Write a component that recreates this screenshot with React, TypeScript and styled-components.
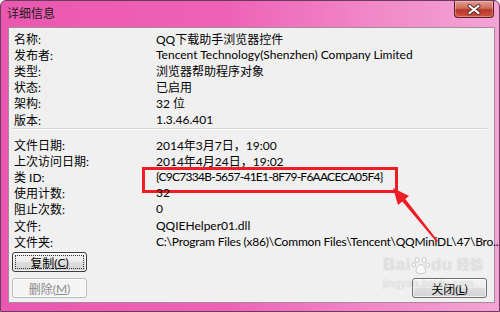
import React from 'react';
import styled, { createGlobalStyle } from 'styled-components';

const GlobalStyle = createGlobalStyle`
  html, body {
    margin: 0;
    padding: 0;
    background: #ffffff;
  }
  * {
    box-sizing: border-box;
  }
`;

const uiFont = `Lato, "Noto Sans CJK SC", sans-serif`;

const Window = styled.div`
  position: relative;
  width: 500px;
  height: 312px;
  display: flex;
  flex-direction: column;
  overflow: hidden;
  border: 1px solid #6b3a5c;
  border-radius: 6px 6px 0 0;
  background: linear-gradient(90deg, #ea58b0 0%, #ee62b6 45%, #f188c8 75%, #f3a4d6 100%);
  font-family: ${uiFont};
  font-size: 12px;
  color: #000;
`;

const TitleBar = styled.div`
  height: 26px;
  display: flex;
  justify-content: space-between;
  align-items: flex-start;
  padding: 0 5px 0 6px;
`;

const Title = styled.div`
  line-height: 26px;
  font-size: 12px;
  color: #1a1a1a;
`;

const CloseButton = styled.div`
  width: 40px;
  height: 17px;
  display: flex;
  align-items: center;
  justify-content: center;
  border: 1px solid #5c1e1e;
  border-top: none;
  border-radius: 0 0 4px 4px;
  background: linear-gradient(180deg, #e29c90 0%, #cf6e5e 45%, #b8352a 55%, #cf5443 100%);
  box-shadow: inset 0 0 0 1px rgba(255, 255, 255, 0.3);
`;

const Client = styled.div`
  flex: 1;
  margin: 0 4px 8px 7px;
  display: flex;
  flex-direction: column;
  background: #f0f0f0;
  border: 1px solid #a58a9c;
  padding: 2px 7px 4px 5px;
`;

const InfoGroup = styled.div`
  display: grid;
  grid-template-columns: 142px 1fr;
  grid-auto-rows: 16.2px;
  align-items: center;
`;

const Label = styled.div`
  white-space: nowrap;
`;

const Value = styled.div<{ $highlight?: boolean; $tight?: boolean }>`
  position: relative;
  white-space: nowrap;
  letter-spacing: ${(p) => (p.$highlight ? '-0.75px' : p.$tight ? '-0.2px' : 'normal')};

  ${(p) =>
    p.$highlight &&
    `
    &::after {
      content: '';
      position: absolute;
      left: -14px;
      top: -2px;
      width: 250px;
      height: 20px;
      border: 3px solid #ee1c24;
    }
  `}
`;

const Separator = styled.div`
  margin: 1px 0 6px -2px;
  border-top: 1px solid #d4d4d4;
  border-bottom: 1px solid #ffffff;
`;

const Footer = styled.div`
  margin-top: auto;
  margin-left: -2px;
  display: flex;
  justify-content: space-between;
  align-items: flex-end;
`;

const ButtonColumn = styled.div`
  display: flex;
  flex-direction: column;
  gap: 6px;
`;

const Button = styled.div<{ $focused?: boolean; $disabled?: boolean }>`
  position: relative;
  width: 75px;
  height: 20px;
  display: flex;
  align-items: center;
  justify-content: center;
  border-radius: 3px;
  font-size: 12px;
  border: 1px solid ${(p) => (p.$disabled ? '#b8bcc0' : p.$focused ? '#3c3c3c' : '#707070')};
  color: ${(p) => (p.$disabled ? '#8c8c8c' : '#000')};
  background: ${(p) =>
    p.$disabled
      ? '#f4f4f4'
      : 'linear-gradient(180deg, #f4f4f4 0%, #ececec 48%, #dedede 52%, #d2d2d2 100%)'};
  box-shadow: inset 0 0 0 1px rgba(255, 255, 255, 0.7);

  ${(p) =>
    p.$focused &&
    `
    &::after {
      content: '';
      position: absolute;
      inset: 2px;
      border: 1px dotted #333;
    }
  `}

  & u {
    text-decoration: underline;
  }
`;

const Overlay = styled.svg`
  position: absolute;
  left: 0;
  top: 0;
  pointer-events: none;
`;

const Watermark = styled.div`
  position: absolute;
  left: 382px;
  top: 254px;
  pointer-events: none;
  color: rgba(255, 255, 255, 0.5);
  text-shadow: 0 0 1px rgba(120, 120, 120, 0.4);
  font-family: "Liberation Sans", "Noto Sans CJK SC", sans-serif;
`;

const WatermarkLogo = styled.div`
  display: flex;
  align-items: flex-end;
  font-size: 17px;
  font-weight: bold;
  line-height: 20px;
  letter-spacing: 0.5px;
`;

const WatermarkCn = styled.span`
  font-size: 13px;
  margin-left: 4px;
`;

const WatermarkUrl = styled.div`
  font-size: 10px;
  margin-top: 3px;
  letter-spacing: 0.6px;
`;

const general: [string, string][] = [
  ['名称:', 'QQ下载助手浏览器控件'],
  ['发布者:', 'Tencent Technology(Shenzhen) Company Limited'],
  ['类型:', '浏览器帮助程序对象'],
  ['状态:', '已启用'],
  ['架构:', '32 位'],
  ['版本:', '1.3.46.401'],
];

const detail: [string, string][] = [
  ['文件日期:', '2014年3月7日，19:00'],
  ['上次访问日期:', '2014年4月24日，19:02'],
  ['类 ID:', '{C9C7334B-5657-41E1-8F79-F6AACECA05F4}'],
  ['使用计数:', '32'],
  ['阻止次数:', '0'],
  ['文件:', 'QQIEHelper01.dll'],
  ['文件夹:', 'C:\\Program Files (x86)\\Common Files\\Tencent\\QQMiniDL\\47\\Bro...'],
];

const App: React.FC = () => {
  return (
    <>
      <GlobalStyle />
      <Window>
        <TitleBar>
          <Title>详细信息</Title>
          <CloseButton>
            <svg width="14" height="11" viewBox="0 0 14 11">
              <path
                d="M2.5 2 L11.5 9 M11.5 2 L2.5 9"
                stroke="#5a2a2a"
                strokeWidth="4"
                strokeLinecap="round"
              />
              <path
                d="M2.5 2 L11.5 9 M11.5 2 L2.5 9"
                stroke="#ffffff"
                strokeWidth="2.2"
                strokeLinecap="round"
              />
            </svg>
          </CloseButton>
        </TitleBar>
        <Client>
          <InfoGroup>
            {general.map(([k, v]) => (
              <React.Fragment key={k}>
                <Label>{k}</Label>
                <Value>{v}</Value>
              </React.Fragment>
            ))}
          </InfoGroup>
          <Separator />
          <InfoGroup>
            {detail.map(([k, v]) => (
              <React.Fragment key={k}>
                <Label>{k}</Label>
                <Value $highlight={k === '类 ID:'} $tight={k === '文件夹:'}>
                  {v}
                </Value>
              </React.Fragment>
            ))}
          </InfoGroup>
          <Footer>
            <ButtonColumn>
              <Button $focused>
                复制(<u>C</u>)
              </Button>
              <Button $disabled>
                删除(<u>M</u>)
              </Button>
            </ButtonColumn>
            <Button>
              关闭(<u>L</u>)
            </Button>
          </Footer>
        </Client>
        <Watermark>
          <WatermarkLogo>
            Bai
            <svg width="20" height="20" viewBox="0 0 20 20">
              <g fill="rgba(255,255,255,0.55)" stroke="rgba(120,120,120,0.4)" strokeWidth="0.8">
                <ellipse cx="6" cy="5" rx="2" ry="2.6" />
                <ellipse cx="13" cy="5" rx="2" ry="2.6" />
                <ellipse cx="2.8" cy="10" rx="1.8" ry="2.2" />
                <ellipse cx="16.6" cy="10" rx="1.8" ry="2.2" />
                <path d="M9.7 9.5 C6 10 4 15 5.5 17.5 C7 19 12.5 19 14 17.5 C15.5 15 13.5 10 9.7 9.5 Z" />
              </g>
            </svg>
            du
            <WatermarkCn>经验</WatermarkCn>
          </WatermarkLogo>
          <WatermarkUrl>jingyan.baidu.com</WatermarkUrl>
        </Watermark>
        <Overlay width="500" height="312" viewBox="0 0 500 312">
          <polygon points="437,240 435.5,241 400.5,199.5 403.5,197" fill="#ee1c24" />
          <polygon points="392,187 408,195 397,204" fill="#ee1c24" />
        </Overlay>
      </Window>
    </>
  );
};

export default App;
